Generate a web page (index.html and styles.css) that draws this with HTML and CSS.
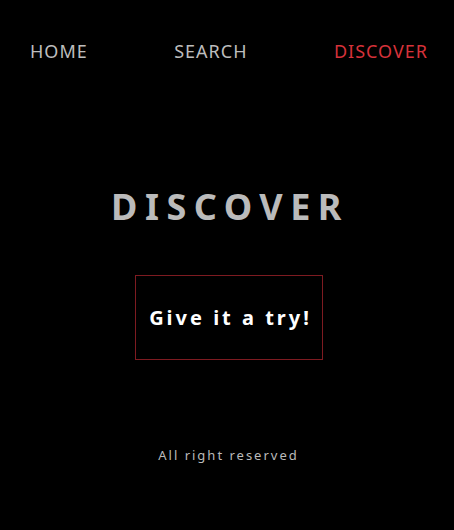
FILE: index.html
```html
<!DOCTYPE html>
<html>
<head>
<meta charset="utf-8">
<link rel="stylesheet" href="styles.css">
</head>
<body>
<nav class="nav">
  <a class="nav-link">HOME</a>
  <a class="nav-link">SEARCH</a>
  <a class="nav-link active">DISCOVER</a>
</nav>
<main class="main">
  <h1 class="title">DISCOVER</h1>
  <button class="try">Give it a try!</button>
</main>
<footer class="footer">All right reserved</footer>
</body>
</html>
```
FILE: styles.css
```css
html, body {
  margin: 0;
  padding: 0;
  background: #000;
  height: 100%;
}
body {
  font-family: "Noto Sans", "Open Sans", sans-serif;
  color: #bbb;
}
.nav {
  display: flex;
  justify-content: space-between;
  align-items: center;
  padding: 38px 26px 0 30px;
  height: 26px;
}
.nav-link {
  font-size: 18px;
  letter-spacing: 1px;
  color: #bdbdbd;
  line-height: 26px;
}
.nav-link.active {
  color: #d6323a;
}
.main {
  display: flex;
  flex-direction: column;
  align-items: center;
  padding: 118px 0 0 4px;
}
.title {
  margin: 0;
  font-size: 36px;
  font-weight: 700;
  letter-spacing: 7.5px;
  line-height: 50px;
  color: #bbb;
  padding-left: 2px;
}
.try {
  margin-top: 43px;
  width: 188px;
  height: 85px;
  background: #000;
  border: 1px solid #7e1b21;
  color: #fff;
  font-family: inherit;
  font-size: 20px;
  font-weight: 700;
  letter-spacing: 3px;
  padding: 0 0 0 3px;
}
.footer {
  text-align: center;
  margin-top: 86px;
  padding-left: 3px;
  font-size: 13px;
  letter-spacing: 2px;
  color: #bbb;
}
```
